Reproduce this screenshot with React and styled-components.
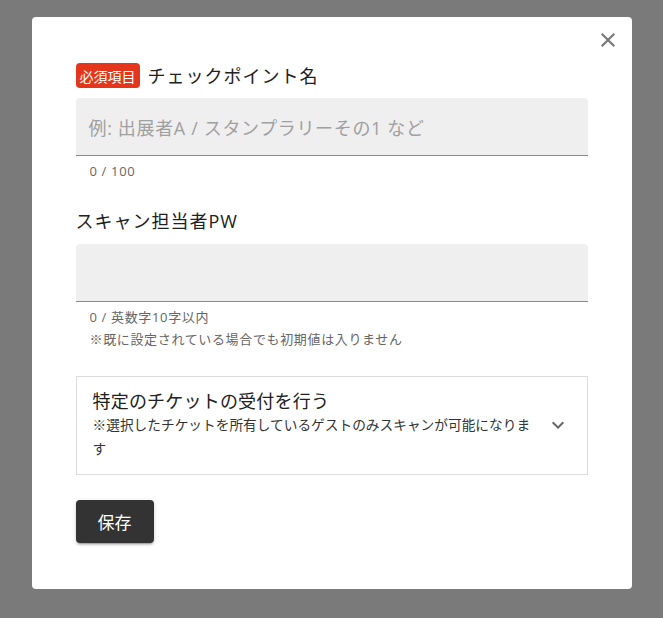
import styled, { createGlobalStyle } from 'styled-components'

const GlobalStyle = createGlobalStyle`
  html, body {
    margin: 0;
    padding: 0;
    height: 100%;
  }
  body {
    font-family: 'Open Sans', 'Noto Sans CJK JP', sans-serif;
    color: #212121;
  }
  * {
    box-sizing: border-box;
  }
`

const Overlay = styled.div`
  min-height: 100vh;
  background-color: #7a7a7a;
  display: flex;
  justify-content: center;
  align-items: flex-start;
  padding-top: 17px;
`

const Dialog = styled.div`
  position: relative;
  width: 600px;
  height: 572px;
  background-color: #fff;
  border-radius: 4px;
  padding: 46px 44px;
  display: flex;
  flex-direction: column;
`

const CloseButton = styled.button`
  position: absolute;
  top: 11px;
  right: 12px;
  width: 24px;
  height: 24px;
  padding: 0;
  border: none;
  background: transparent;
  color: #757575;
  cursor: pointer;
  display: flex;
  align-items: center;
  justify-content: center;
`

const LabelRow = styled.div`
  display: flex;
  align-items: center;
  gap: 8px;
  height: 25px;
  margin-bottom: ${(p) => p.$mb || 10}px;
`

const Badge = styled.span`
  display: inline-flex;
  align-items: center;
  justify-content: center;
  height: 25px;
  padding: 0 4px;
  background-color: #e4361c;
  color: #fff;
  font-size: 14px;
  border-radius: 4px;
`

const Label = styled.span`
  font-size: 18px;
  line-height: 24px;
  letter-spacing: 1px;
  color: #212121;
`

const InputBox = styled.div`
  height: 58px;
  background-color: #efefef;
  border-bottom: 1px solid #8a8a8a;
  border-radius: 4px 4px 0 0;
  display: flex;
  align-items: center;
  padding: 0 13px;
`

const Placeholder = styled.span`
  font-size: 18px;
  letter-spacing: 0.65px;
  color: #a0a0a0;
`

const Helpers = styled.div`
  padding: 4px 14px 0;
  display: flex;
  flex-direction: column;
`

const HelperText = styled.span`
  font-size: 13px;
  line-height: 22px;
  letter-spacing: 0.65px;
  color: #666;
`

const Section = styled.div`
  margin-top: ${(p) => p.$mt || 0}px;
`

const Accordion = styled.div`
  margin-top: 26px;
  border: 1px solid #dcdcdc;
  padding: 12px 17px 13px 16px;
  display: flex;
  align-items: center;
  gap: 10px;
`

const AccordionText = styled.div`
  flex: 1;
  display: flex;
  flex-direction: column;
`

const AccordionTitle = styled.span`
  font-size: 18px;
  line-height: 24px;
  letter-spacing: 0.2px;
  color: #212121;
`

const AccordionSub = styled.span`
  font-size: 13.7px;
  line-height: 24px;
  color: #333;
`

const ExpandIcon = styled.span`
  width: 24px;
  height: 24px;
  color: #666;
  display: flex;
  align-items: center;
  justify-content: center;
`

const SaveButton = styled.button`
  align-self: flex-start;
  margin-top: 25px;
  width: 78px;
  height: 46px;
  border: none;
  border-radius: 4px;
  background-color: #333;
  color: #fff;
  font-family: 'Open Sans', 'Noto Sans CJK JP', sans-serif;
  font-size: 17px;
  box-shadow: 0 3px 1px -2px rgba(0, 0, 0, 0.2), 0 2px 2px 0 rgba(0, 0, 0, 0.14),
    0 1px 5px 0 rgba(0, 0, 0, 0.12);
  cursor: pointer;
`

const App = () => {
  return (
    <>
      <GlobalStyle />
      <Overlay>
        <Dialog>
          <CloseButton aria-label='close'>
            <svg width='24' height='24' viewBox='0 0 24 24' fill='currentColor'>
              <path d='M19 6.41 17.59 5 12 10.59 6.41 5 5 6.41 10.59 12 5 17.59 6.41 19 12 13.41 17.59 19 19 17.59 13.41 12z' />
            </svg>
          </CloseButton>

          <Section>
            <LabelRow>
              <Badge>必須項目</Badge>
              <Label>チェックポイント名</Label>
            </LabelRow>
            <InputBox>
              <Placeholder>例: 出展者A / スタンプラリーその1 など</Placeholder>
            </InputBox>
            <Helpers>
              <HelperText>0 / 100</HelperText>
            </Helpers>
          </Section>

          <Section $mt={26}>
            <LabelRow $mb={11}>
              <Label>スキャン担当者PW</Label>
            </LabelRow>
            <InputBox />
            <Helpers>
              <HelperText>0 / 英数字10字以内</HelperText>
              <HelperText>※既に設定されている場合でも初期値は入りません</HelperText>
            </Helpers>
          </Section>

          <Accordion>
            <AccordionText>
              <AccordionTitle>特定のチケットの受付を行う</AccordionTitle>
              <AccordionSub>
                ※選択したチケットを所有しているゲストのみスキャンが可能になります
              </AccordionSub>
            </AccordionText>
            <ExpandIcon>
              <svg width='24' height='24' viewBox='0 0 24 24' fill='currentColor'>
                <path d='M16.59 8.59 12 13.17 7.41 8.59 6 10l6 6 6-6z' />
              </svg>
            </ExpandIcon>
          </Accordion>

          <SaveButton>保存</SaveButton>
        </Dialog>
      </Overlay>
    </>
  )
}

export default App
